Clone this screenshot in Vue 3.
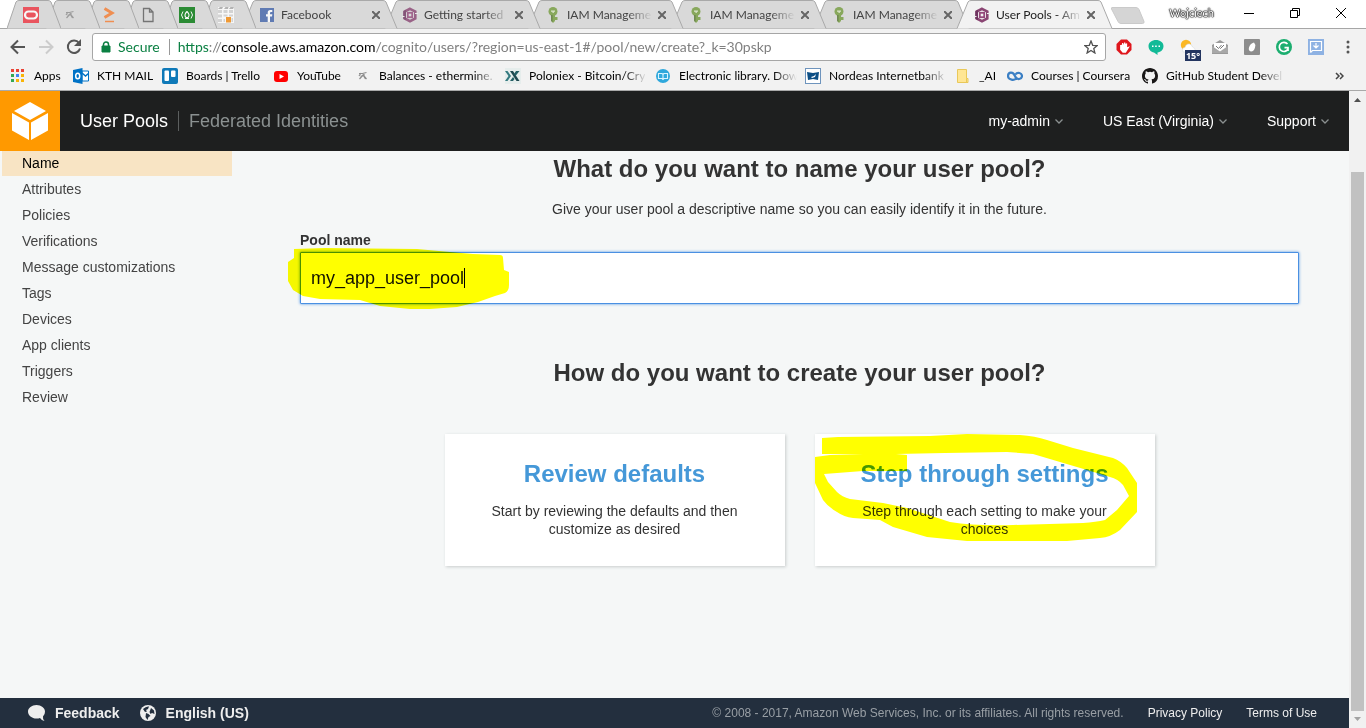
<script setup>
import { ref } from 'vue'

const tabs = [
  { icon: 'oval', small: true },
  { icon: 'pick', small: true },
  { icon: 'arrow', small: true },
  { icon: 'file', small: true },
  { icon: 'camp', small: true },
  { icon: 'boxes', small: true },
  { icon: 'facebook', title: 'Facebook' },
  { icon: 'cognito', title: 'Getting started' },
  { icon: 'iam', title: 'IAM Manageme' },
  { icon: 'iam', title: 'IAM Manageme' },
  { icon: 'iam', title: 'IAM Manageme' },
  { icon: 'cognito', title: 'User Pools - Am', active: true },
]

const bookmarks = [
  { icon: 'apps', title: 'Apps' },
  { icon: 'outlook', title: 'KTH MAIL' },
  { icon: 'trello', title: 'Boards | Trello' },
  { icon: 'youtube', title: 'YouTube' },
  { icon: 'pick', title: 'Balances - ethermine.', fade: true },
  { icon: 'poloniex', title: 'Poloniex - Bitcoin/Cry', fade: true },
  { icon: 'library', title: 'Electronic library. Dow', fade: true },
  { icon: 'nordea', title: 'Nordeas Internetbank', fade: true },
  { icon: 'folder', title: '_AI' },
  { icon: 'coursera', title: 'Courses | Coursera' },
  { icon: 'github', title: 'GitHub Student Devel', fade: true },
]

const icons = {
  oval: '<rect width="16" height="16" fill="#ee3340"/><rect x="2" y="4.500" width="12" height="7" rx="3.500" fill="none" stroke="#fff" stroke-width="2.200"/>',
  pick: '<path d="M4 5.500h3.500l4-1M6 5l-2 3M5.500 8h3M8.500 6.500l-4 4.500M9 5v3l2.500 3M9 8.500l1.500 2.500" fill="none" stroke="#8d8d8d" stroke-width="1.200"/>',
  arrow: '<path d="M3.500 1.500l7.500 4.500-7.500 4.500" fill="none" stroke="#f57c30" stroke-width="3"/><path d="M4 14.500h9" stroke="#f57c30" stroke-width="1.500"/>',
  file: '<path d="M3.500 1.500h6l3.500 3.500v9.500h-9.500zM9.500 1.500v3.500h3.500" fill="none" stroke="#5c5c5c" stroke-width="1.300"/>',
  camp: '<rect width="16" height="16" fill="#00780c"/><path d="M4 4.500q-3 3.500 0 7M12 4.500q3 3.500 0 7M6 11.500h4" fill="none" stroke="#fff"/><path d="M8 4.500q-3.500 3.500-1 6h2q2.500-2.500-1-6" fill="none" stroke="#fff" stroke-width="1.100"/>',
  boxes: '<path d="M0 0h16v16H0z" fill="#fff"/><path d="M0 2l2-2h3L4 2zM6 2l1.500-2h3L10 2zM11 2l1.500-2H16l-1 2z" fill="#aaa"/><path d="M0 3h4v3H0zM5.500 3h4v3h-4zM11 3h4v3h-4zM0 7.500h4v3H0zM5.500 7.500h4v2h-4zM0 12h4v3H0zM5.500 12h1.500v3H5.500zM11 7.500h4v2h-4zM13.500 11H15v4h-1.500z" fill="#d2d2d2"/><path d="M8 10h5v5.500H8z" fill="#f58a0c"/>',
  facebook: '<rect x="1" y="1" width="14" height="14" fill="#4264aa"/><path d="M11 15V9.500h2l.3-2.200H11V6q0-1 1-1h1.300V3h-2Q8.700 3 8.700 5.600v1.700H7v2.200h1.700V15z" fill="#fff"/>',
  cognito: '<path d="M8 1.800l5.300 2.700v7L8 14.200l-5.300-2.700v-7z" fill="none" stroke="#8a4573" stroke-width="2.600"/><path d="M1.300 4.200l2.700-1.500v10.600l-2.700-1.500z" fill="#6f3460"/><rect x="5.800" y="5.800" width="4.400" height="4.400" fill="none" stroke="#94487b" stroke-width="1.800"/><path d="M0 9.500h2.500M13 6.500h3" stroke="#eee"/>',
  iam: '<circle cx="8" cy="4.500" r="4.500" fill="#759c3e"/><path d="M6.200 8h3.800v6L8 16l-1.800-2zM10 10h2.500v3H10z" fill="#759c3e"/><path d="M6.200 8h1.300v7l-1.300-1z" fill="#4c6b28"/><path d="M6 3.500h4v1.300H8.800V6H7.500V4.800H6z" fill="#dce8c7"/>',
  apps: '<path d="M1 1h3v3H1zM6 1h3v3H6zM11 1h3v3h-3z" fill="#ea4335"/><path d="M1 6h3v3H1zM1 11h3v3H1z" fill="#34a853"/><path d="M6 6h3v3H6z" fill="#4285f4"/><path d="M11 6h3v3h-3zM6 11h3v3H6zM11 11h3v3h-3z" fill="#f9b406"/>',
  outlook: '<path d="M9 3h6.500v10H9z" fill="#fff" stroke="#0072c6"/><path d="M9 5l3.500 3L16 5" fill="none" stroke="#0072c6" stroke-width="1.500"/><path d="M0 2l9.500-2v16L0 14z" fill="#0072c6"/><ellipse cx="4.700" cy="8" rx="2" ry="2.800" fill="none" stroke="#fff" stroke-width="1.500"/>',
  trello: '<rect width="16" height="16" rx="2" fill="#0f79b8"/><rect x="2.500" y="2.500" width="4.500" height="10.500" rx="1" fill="#fff"/><rect x="9" y="2.500" width="4.500" height="6.500" rx="1" fill="#fff"/>',
  youtube: '<rect x="1" y="3" width="14" height="11" rx="3" fill="#f00"/><path d="M6.500 6v5l4.500-2.500z" fill="#fff"/>',
  poloniex: '<rect width="16" height="16" fill="#e6edec"/><path d="M0 3h2.500l3.500 5-3.500 5H0l3.500-5z" fill="#357a80"/><path d="M5 3h3l6.500 10h-3z" fill="#1f4950"/><path d="M11 3h3.500l-4 5-1.500-2zM8 9l1.500 2-1.500 2H5z" fill="#245f65"/>',
  library: '<circle cx="8" cy="8" r="7" fill="#2fa8dc"/><path d="M3.500 5.500h3.500l1 1 1-1h3.500v5H9l-1 1-1-1H3.500zM8 6.500v5" fill="none" stroke="#d9f4ff" stroke-width="1.100"/>',
  nordea: '<rect x=".5" y=".5" width="15" height="15" fill="#fff" stroke="#6e94bd"/><path d="M2 4l6 1 6-1-1 8-5-1-5 1z" fill="#0d4f85"/><path d="M6 9l3-1 2-2-1 3-3 1z" fill="#fff"/>',
  folder: '<path d="M2.500 1.500h9v9h1.500v4H2.500z" fill="#ffe694" stroke="#e9c859"/><path d="M11.500 10.500v4" stroke="#e9c859"/>',
  coursera: '<path d="M9.500 10C7.500 13 1 12 1 8s5-5 7 0 7 3 7 0-4.500-4.500-6.500-1.500" fill="none" stroke="#3b7fc4" stroke-width="2.200"/>',
  github: '<path fill="#191717" d="M8 0C3.580 0 0 3.580 0 8c0 3.540 2.290 6.530 5.470 7.590.4.070.55-.17.55-.38 0-.19-.01-.82-.01-1.490-2.010.37-2.530-.49-2.690-.94-.09-.23-.48-.94-.82-1.130-.28-.15-.68-.52-.01-.53.63-.01 1.080.58 1.230.82.72 1.210 1.870.87 2.330.66.070-.52.28-.87.51-1.070-1.780-.2-3.640-.89-3.640-3.950 0-.87.31-1.590.82-2.150-.08-.2-.36-1.020.08-2.120 0 0 .67-.21 2.200.82a7.600 7.600 0 0 1 4 0c1.530-1.040 2.200-.82 2.200-.82.44 1.100.16 1.920.08 2.120.51.56.82 1.270.82 2.150 0 3.070-1.870 3.750-3.650 3.950.29.25.54.73.54 1.480 0 1.070-.01 1.930-.01 2.200 0 .21.15.46.55.38A8 8 0 0 0 16 8c0-4.420-3.580-8-8-8z"/>',
  hand: '<path d="M5 .5h6l4.500 4.500v6L11 15.500H5L.5 11V5z" fill="#df161c"/><path d="M4.800 6v4.500L7 13h2.500l2.800-4.500-1.800.7V4.500M6.700 9V4M8.700 9V3.500" fill="#fff" stroke="#fff" stroke-width="1.300"/>',
  chat: '<path d="M8 1c-4 0-7.500 2.500-7.500 6S3 13 6 13.500L9.500 16v-2.500c3.500-.5 6-3 6-6.500S12 1 8 1z" fill="#12ba97"/><path d="M4 6.500h1.500v1.500H4zM7.200 6.500h1.500v1.500H7.200zM10.500 6.500H12v1.500h-1.500z" fill="#fff"/>',
  weather: '<circle cx="6" cy="6" r="5.200" fill="#fbb825"/><path d="M3 13q-1.500-4.500 2-4.500 1-4 4.500-3.500 2.500.5 3 3 3 .5 3 5z" fill="#fff" stroke="#d5dade" stroke-width=".6"/>',
  mail: '<path d="M0 6l8-5 8 5v9H0z" fill="#9a9a9a"/><path d="M2 4h12v6l-6 3-6-3z" fill="#fff"/><path d="M4 7l2.500 2.500 3-3.500M8 9l.5.500L12 6" fill="none" stroke="#777"/><path d="M0 7l8 5.500L16 7v7H0z" fill="#a8a8a8"/>',
  leaf: '<rect width="16" height="16" rx="1" fill="#8d8d8d"/><path d="M10 3.500q2 2 1 5-1 4-4 4-3-1-2-4 1-4 5-5" fill="#fff"/>',
  grammarly: '<circle cx="8" cy="8" r="8" fill="#1cae70"/><path d="M11.500 5A4.600 4.600 0 1 0 12 10M8.500 8.700H12V12" fill="none" stroke="#fff" stroke-width="1.700"/>',
  save: '<rect width="16" height="16" fill="#8eb2e3"/><path d="M2.500 13.500v-11h11v9h-9l-2 2M8 4v5M5.500 6.500L8 9l2.500-2.500" fill="none" stroke="#fff" stroke-width="1.200"/>',
}

const extensions = ['hand', 'chat', 'weather', 'mail', 'leaf', 'grammarly', 'save']
const accountMenus = ['my-admin', 'US East (Virginia)', 'Support']
const steps = ['Name', 'Attributes', 'Policies', 'Verifications', 'Message customizations', 'Tags', 'Devices', 'App clients', 'Triggers', 'Review']
const poolName = ref('my_app_user_pool')

// Earlier tabs overlap later ones; the active tab lies over all of them.
const stackOrder = (tab, index) => (tab.active ? tabs.length + 1 : tabs.length - index)
</script>

<template>
  <div class="window">
    <div class="tab-strip">
      <div v-for="(tab, i) in tabs" :key="i" class="tab" :class="{ small: tab.small, active: tab.active }" :style="{ zIndex: stackOrder(tab, i) }">
        <svg class="tab-shape" :viewBox="tab.small ? '0 0 54 29' : '0 0 157 29'" aria-hidden="true">
          <path v-if="tab.small" d="M0 28.500L9 2Q10 .5 12 .5H41Q43 .5 44 2L54 28.500" />
          <path v-else d="M1 28.500L12 2Q13 .5 15 .5H142Q144 .5 145 2L156 28.500" />
        </svg>
        <button class="tab-main" :aria-label="tab.title || 'Pinned tab'">
          <svg class="icon" viewBox="0 0 16 16" v-html="icons[tab.icon]" />
          <span v-if="tab.title" class="tab-title">{{ tab.title }}</span>
        </button>
        <button v-if="!tab.small" class="tab-close" aria-label="Close tab">
          <svg width="8" height="8" viewBox="0 0 8 8"><path d="M0 0l8 8M8 0L0 8" /></svg>
        </button>
      </div>
      <button class="new-tab" aria-label="New tab">
        <svg width="34" height="17" viewBox="0 0 34 17"><path d="M1 .5h24q2 0 3 2l5 12q.5 2-1.500 2H10q-2 0-3-2L.500 2Q0 .5 1 .5z" fill="#d5d5d5" stroke="#cacaca" /></svg>
      </button>
      <div class="window-controls">
        <button class="profile">Wojciech</button>
        <button aria-label="Minimise"><svg width="10" height="10" viewBox="0 0 10 10"><path d="M0 5.500h10" /></svg></button>
        <button aria-label="Restore"><svg width="10" height="10" viewBox="0 0 10 10"><path d="M.5 2.500h7v7h-7zM2.500 2.500v-2h7v7h-2" /></svg></button>
        <button aria-label="Close"><svg width="10" height="10" viewBox="0 0 10 10"><path d="M0 0l10 10M10 0L0 10" /></svg></button>
      </div>
    </div>

    <div class="toolbar">
      <button class="nav-button" aria-label="Back"><svg width="16" height="16" viewBox="0 0 16 16"><path d="M15 8H2M8 1.500L1.500 8 8 14.500" /></svg></button>
      <button class="nav-button disabled" aria-label="Forward"><svg width="16" height="16" viewBox="0 0 16 16"><path d="M1 8h13M8 1.500L14.500 8 8 14.500" /></svg></button>
      <button class="nav-button" aria-label="Reload"><svg width="16" height="16" viewBox="0 0 16 16"><path d="M13 4A6.200 6.200 0 1 0 14 9.500" /><path d="M15 0v7H8z" class="solid" /></svg></button>
      <div class="omnibox">
        <svg class="lock" width="10" height="12" viewBox="0 0 10 12"><path d="M1 5h8v6H1z" fill="#0b8043" stroke="#0b8043" /><path d="M2.500 5V3.500a2.500 2.500 0 0 1 5 0V5" fill="none" stroke="#0b8043" stroke-width="1.500" /></svg>
        <span class="secure">Secure</span>
        <span class="url"><span class="scheme">https</span>://<span class="host">console.aws.amazon.com</span>/cognito/users/?region=us-east-1#/pool/new/create?_k=30pskp</span>
        <button aria-label="Bookmark this page"><svg width="14" height="14" viewBox="0 0 14 14"><path d="M7 1l1.700 4.300 4.600.3-3.500 3 1.100 4.400L7 10.500 3.100 13l1.100-4.400-3.500-3 4.600-.3z" fill="none" stroke="#505050" stroke-width="1.300" /></svg></button>
      </div>
      <div class="extensions">
        <button v-for="name in extensions" :key="name" class="extension" :aria-label="name">
          <svg class="icon" viewBox="0 0 16 16" v-html="icons[name]" />
          <span v-if="name === 'weather'" class="badge">15°</span>
        </button>
        <button class="extension" aria-label="Menu"><svg class="icon" viewBox="0 0 16 16"><circle cx="8" cy="3" r="1.500" /><circle cx="8" cy="8" r="1.500" /><circle cx="8" cy="13" r="1.500" /></svg></button>
      </div>
    </div>

    <nav class="bookmarks" aria-label="Bookmarks">
      <a v-for="mark in bookmarks" :key="mark.title" href="#" class="bookmark" :class="{ fade: mark.fade }">
        <svg class="icon" viewBox="0 0 16 16" v-html="icons[mark.icon]" />
        <span>{{ mark.title }}</span>
      </a>
      <button class="more" aria-label="More bookmarks"><svg width="9" height="8" viewBox="0 0 9 8"><path d="M1 1l3 3-3 3M5 1l3 3-3 3" fill="none" stroke="#444" stroke-width="1.500" /></svg></button>
    </nav>

    <div class="viewport">
      <div class="page">
        <header class="aws-header">
          <a href="#" class="aws-logo" aria-label="Console home">
            <svg width="36" height="40" viewBox="0 0 36 40"><path d="M18 1l16 9-16 9L2 10zM0 12l17 9.500V39L0 29.500zM36 12l-17 9.500V39l17-9.500z" fill="#fff" /></svg>
          </a>
          <nav class="services">
            <a href="#" class="current">User Pools</a>
            <a href="#" class="other">Federated Identities</a>
          </nav>
          <div class="account">
            <button v-for="menu in accountMenus" :key="menu">
              {{ menu }}
              <svg width="8" height="5" viewBox="0 0 8 5"><path d="M.5.5L4 4 7.500.5" fill="none" stroke="#8b9090" stroke-width="1.300" /></svg>
            </button>
          </div>
        </header>

        <div class="content">
          <nav class="steps" aria-label="Steps">
            <a v-for="(step, i) in steps" :key="step" href="#" :class="{ selected: i === 0 }">{{ step }}</a>
          </nav>
          <main>
            <h2>What do you want to name your user pool?</h2>
            <p class="hint">Give your user pool a descriptive name so you can easily identify it in the future.</p>
            <label for="pool-name">Pool name</label>
            <div class="field">
              <input id="pool-name" v-model="poolName" type="text" />
              <span class="caret"></span>
              <svg class="marker marker-name" viewBox="288 248 222 62" width="222" height="62">
                <path d="M294 249L325 248 417 249 450 252 473 254 500 255Q503 255 503 258L504 270 509 272V285Q509 291 505 293L495 296 478 302 457 307 430 309H410L380 306 360 300 320 299 303 296 293 290 288 281V262L294 258z" />
              </svg>
            </div>
            <h2 class="second">How do you want to create your user pool?</h2>
            <div class="cards">
              <button class="card">
                <span class="card-title">Review defaults</span>
                <span class="card-text">Start by reviewing the defaults and then customize as desired</span>
              </button>
              <button class="card">
                <span class="card-title">Step through settings</span>
                <span class="card-text">Step through each setting to make your choices</span>
                <svg class="marker marker-card" viewBox="815 434 323 108" width="323" height="108">
                  <path fill-rule="evenodd" d="M822 438L838 437 930 436 967 434 1020 435Q1035 436 1047 440L1073 448 1113 458Q1121 461 1127 468L1137 483V512L1120 530Q1111 537 1100 538L1067 541H967L927 537 893 527 880 520 853 518Q844 517 837 512 828 507 823 500L815 483V457L830 455 863 454 822 454zM896 454L945 453 1007 452 1033 454 1060 462 1087 470 1110 477Q1118 479 1123 485L1129 496 1117 510 1105 520Q1096 522 1083 523L1013 525Q975 526 950 522L907 508 883 503 850 499Q842 497 837 492L828 482 824 474 837 473 863 471H907V455z" />
                </svg>
              </button>
            </div>
          </main>
        </div>

        <footer>
          <a href="#" class="strong">
            <svg width="17" height="16" viewBox="0 0 17 16"><path d="M8.500 0C3.800 0 0 3 0 6.700s3.800 6.800 8.500 6.800q2 0 3.500-.5 1.500 2.500 4.500 3-2-2-1.500-4.500 2-2 2-4.800C17 3 13.200 0 8.500 0z" fill="#eee" /></svg>
            Feedback
          </a>
          <a href="#" class="strong">
            <svg width="16" height="16" viewBox="0 0 16 16"><circle cx="8" cy="8" r="8" fill="#eee" /><path d="M3 4q3-3 6-2.500L8 4 6 5l1 1.500-2 .5zM6 8l2.500 1 2 2-2 1-1 3-2-3zM11 3l3 2.500.5 3.500-2.500-1-1.500 1-1-2z" fill="#232f3e" /></svg>
            English (US)
          </a>
          <span class="copyright">© 2008 - 2017, Amazon Web Services, Inc. or its affiliates. All rights reserved.</span>
          <a href="#">Privacy Policy</a>
          <a href="#">Terms of Use</a>
        </footer>
      </div>
      <div class="scrollbar" aria-hidden="true">
        <svg width="7" height="4" viewBox="0 0 7 4"><path d="M0 4L3.500 0 7 4z" fill="#505050" /></svg>
        <div class="track"><div class="thumb"></div></div>
        <svg width="7" height="4" viewBox="0 0 7 4"><path d="M0 0h7L3.500 4z" fill="#a3a3a3" /></svg>
      </div>
    </div>
  </div>
</template>

<style>
body { margin: 0; overflow: hidden; }
</style>

<style scoped>
* { box-sizing: border-box; }
.window { display: flex; flex-direction: column; height: 100vh; font: 12px/16px Lato, "Open Sans", sans-serif; background: #fff; color: #222; }
button { margin: 0; padding: 0; border: 0; background: none; font: inherit; color: inherit; }
a { color: inherit; text-decoration: none; }
svg { display: block; flex: none; }
.icon { width: 16px; height: 16px; }

.tab-strip { display: flex; flex: none; height: 29px; padding-left: 7px; border-bottom: 1px solid #a6a6a6; isolation: isolate; }
.tab { position: relative; display: flex; align-items: center; flex: none; width: 157px; height: 29px; margin-right: -14px; padding: 0 18px; }
.tab.small { width: 54px; margin-right: -15px; padding: 0 16px; }
.tab.active { margin-right: -2px; }
.tab-shape { position: absolute; z-index: -1; top: 0; left: 0; width: 100%; height: 29px; fill: #d9d9d9; stroke: #a9a9a9; }
.active .tab-shape { fill: #f2f2f2; }
.tab-main { display: flex; flex: 1; gap: 6px; align-items: center; min-width: 0; }
.tab-main .icon { opacity: 0.8; }
.active .tab-main .icon { opacity: 1; }
.tab-title { flex: 1; text-align: left; white-space: nowrap; color: #444; -webkit-mask-image: linear-gradient(to right, #000 60px, transparent 86px); mask-image: linear-gradient(to right, #000 60px, transparent 86px); }
.active .tab-title { color: #222; }
.tab-close { margin-left: 8px; }
.tab-close path { stroke: #666; stroke-width: 2; }
.new-tab { width: 34px; margin-top: 3px; }
.window-controls { display: flex; flex: 1; justify-content: flex-end; align-items: center; gap: 36px; padding: 0 20px 2px 0; }
.window-controls path { fill: none; stroke: #000; }
.profile { margin-right: -6px; font-size: 11px; color: #fff; text-shadow: 0 0 1px #000, 0 0 1px #000, 0 0 1px #000, 0 0 2px #000; }

.toolbar { display: flex; align-items: center; flex: none; height: 33px; padding: 3px 10px 0; background: #f2f2f2; }
.nav-button { margin-right: 12px; }
.nav-button path { fill: none; stroke: #555; stroke-width: 2; }
.nav-button .solid { fill: #555; stroke: none; }
.nav-button.disabled path { stroke: #ccc; }
.omnibox { display: flex; flex: 1; align-items: center; height: 28px; margin-left: -2px; padding: 0 7px 0 8px; border: 1px solid #a6a6a6; border-radius: 3px; background: #fff; font-size: 14px; }
.secure { margin-left: 7px; padding-right: 9px; border-right: 1px solid #999; color: #0b8043; }
.url { flex: 1; padding-left: 8px; color: #808080; white-space: nowrap; }
.scheme { color: #0b8043; }
.host { color: #000; }
.extensions { display: flex; gap: 16px; padding-left: 10px; }
.extension { position: relative; }
.extension svg { fill: #555; }
.badge { position: absolute; left: 5px; top: 11px; width: 16px; height: 11px; background: #233560; color: #fff; font: bold 9px/11px "Open Sans", sans-serif; text-align: center; }

.bookmarks { display: grid; grid-template-columns: 63px 89px 111px 82px 150px 150px 150px 150px 52px 135px 138px 1fr; align-items: center; flex: none; height: 29px; padding: 0 22px 0 10px; border-bottom: 1px solid #a9a9a9; background: #f2f2f2; }
.bookmark { display: flex; align-items: center; gap: 8px; white-space: nowrap; color: #000; }
.bookmark.fade span { -webkit-mask-image: linear-gradient(to right, #000 94px, transparent 118px); mask-image: linear-gradient(to right, #000 94px, transparent 118px); }
.more { justify-self: end; }

.viewport { display: flex; flex: 1; min-height: 0; }
.page { display: flex; flex: 1; flex-direction: column; min-width: 0; background: #f5f7f7; font: 14px/20px "Liberation Sans", Arial, sans-serif; color: #333; }
.aws-header { display: flex; flex: none; align-items: center; position: relative; z-index: 1; height: 60px; background: #1e1f1f; color: #fff; }
.aws-logo { display: flex; align-items: center; justify-content: center; width: 60px; height: 60px; background: #f90; }
.services { display: flex; flex: 1; margin-left: 20px; font-size: 18px; }
.other { margin-left: 10px; padding-left: 10px; border-left: 1px solid #5c5f5f; color: #8b9191; }
.account { display: flex; gap: 40px; padding-right: 20px; }
.account button { display: flex; gap: 5px; align-items: center; }

.content { display: flex; flex: 1; min-height: 0; }
.steps { flex: none; width: 230px; margin: -1px 0 0 2px; }
.steps a { display: block; padding-left: 20px; line-height: 26px; color: #444; }
.steps .selected { background: #f8e4c4; color: #000; }
main { flex: 1; padding: 4px 50px 0 68px; }
h2 { margin: 0; font-size: 24px; line-height: 28px; text-align: center; }
.hint { margin: 16px 0 11px; text-align: center; }
label { display: block; font-weight: bold; margin-bottom: 2px; }
.field { position: relative; }
input { display: block; width: 100%; height: 52px; padding: 0 10px; border: 1px solid #4a90e2; border-radius: 1px; outline: 0; background: #fff; box-shadow: 0 0 3px #4a90e2; font: 18px "Liberation Sans", Arial, sans-serif; color: #111; }
.caret { position: absolute; left: 164px; top: 16px; width: 1px; height: 20px; background: #000; }
.marker { position: absolute; pointer-events: none; mix-blend-mode: multiply; fill: #ff0; }
.marker-name { left: -12px; top: -4px; }
.marker-card { left: 0; top: 0; }
.second { margin-top: 55px; }
.cards { display: flex; justify-content: center; gap: 30px; margin-top: 47px; }
.card { position: relative; display: flex; flex-direction: column; align-items: center; width: 340px; padding: 25px 40px 28px; background: #fff; box-shadow: 1px 1px 3px #c8cccc; line-height: 18px; }
.card-title { font-size: 24px; font-weight: bold; line-height: 30px; color: #4598d8; white-space: nowrap; }
.card-text { margin-top: 13px; }

footer { display: flex; flex: none; align-items: center; height: 30px; padding: 0 32px 0 28px; background: #232f3e; color: #eee; font-size: 12px; }
.strong { display: flex; gap: 10px; align-items: center; margin-right: 20px; font-size: 14px; font-weight: bold; }
.copyright { flex: 1; text-align: right; color: #999fa5; }
footer a:not(.strong) { margin-left: 24px; }

.scrollbar { display: flex; flex: none; flex-direction: column; align-items: center; width: 17px; padding: 7px 0; background: #f1f1f1; }
.track { display: flex; flex: 1; flex-direction: column; width: 13px; padding: 70px 0 6px; }
.thumb { flex: 1; background: #c1c1c1; }
</style>
